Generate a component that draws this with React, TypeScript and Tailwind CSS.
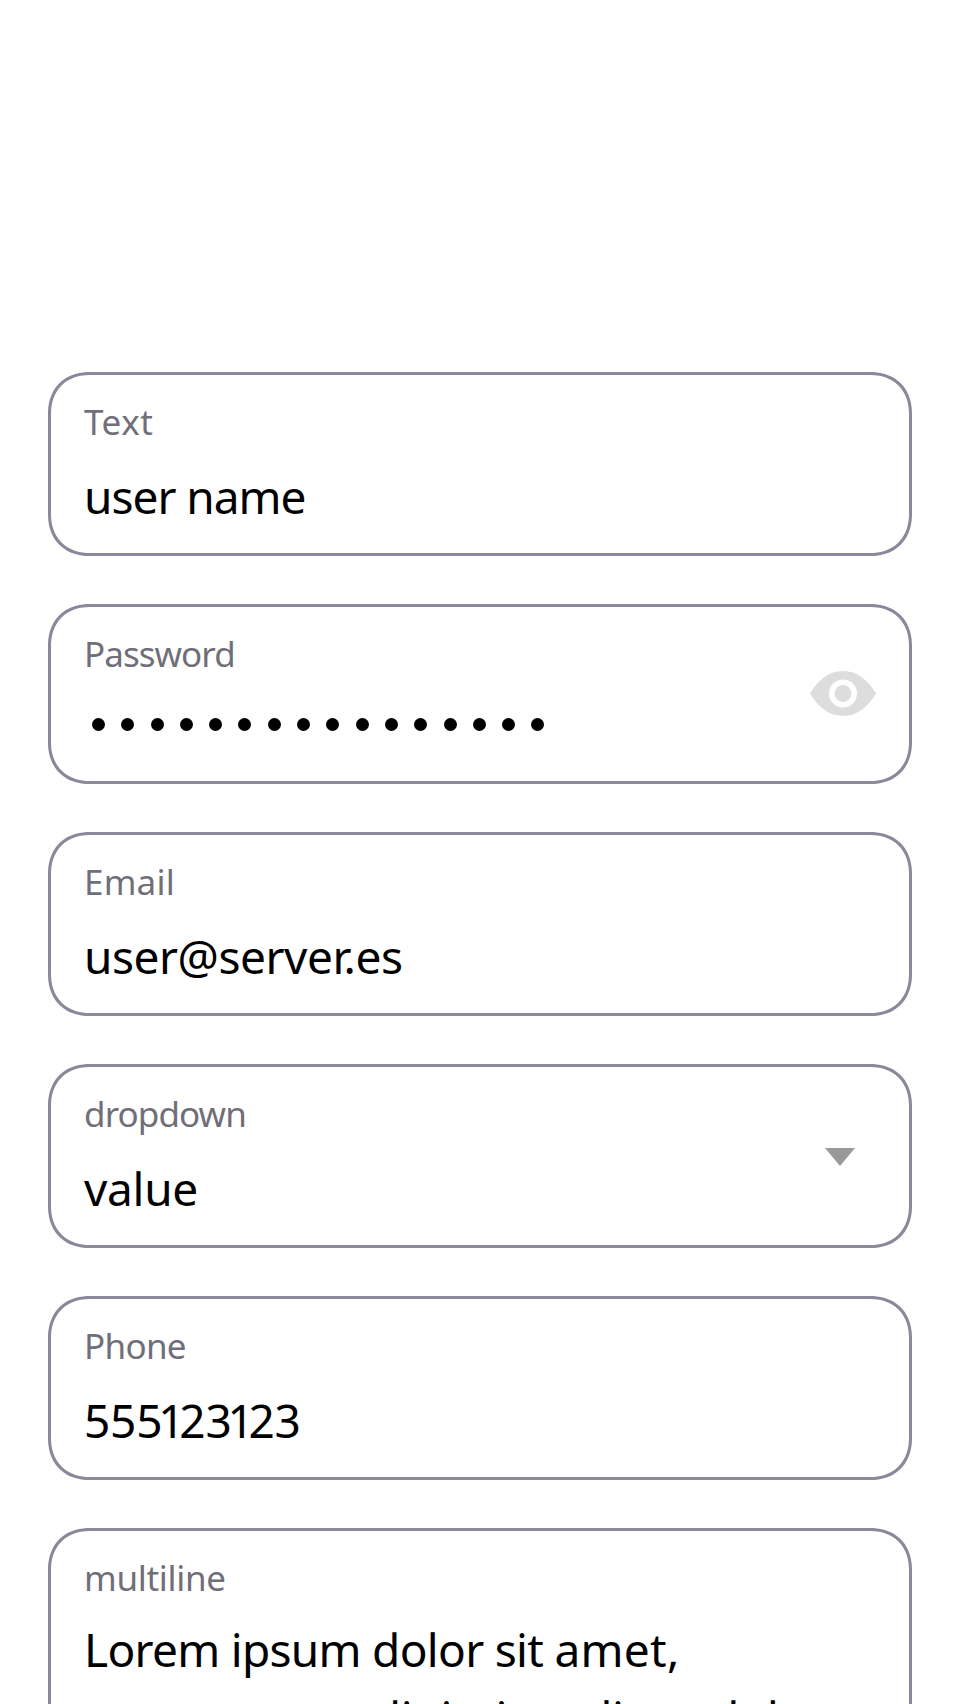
import { ReactNode } from "react";

type Line = { text: ReactNode; spacing: string };

function Field({
  label,
  labelSpacing,
  height = "h-[184px]",
  icon,
  children,
}: {
  label: string;
  labelSpacing: string;
  height?: string;
  icon?: ReactNode;
  children: ReactNode;
}) {
  return (
    <section
      className={`flex w-full shrink-0 items-center justify-between rounded-[42px] border-[3px] border-[#8a8899] pl-[33px] [corner-shape:superellipse(1.15)] ${height}`}
    >
      <div className="flex h-full flex-col pt-[23px]">
        <div className={`h-[48px] text-[35px] leading-[48px] whitespace-nowrap text-[#706f79] ${labelSpacing}`}>
          {label}
        </div>
        {children}
      </div>
      {icon}
    </section>
  );
}

function Value({ text, spacing }: Line) {
  return <div className={`mt-[19px] text-[46px] leading-[62px] whitespace-nowrap text-black ${spacing}`}>{text}</div>;
}

const dots = Array.from({ length: 16 });

export default function App() {
  return (
    <main className="flex h-[1704px] w-[960px] flex-col gap-12 overflow-hidden bg-white px-12 pt-[372px] font-['Noto_Sans',sans-serif]">
      <Field label="Text" labelSpacing="tracking-[0.6px]">
        <Value text="user name" spacing="tracking-[-1px]" />
      </Field>
      <Field
        label="Password"
        labelSpacing="tracking-[-0.95px]"
        height="h-[180px]"
        icon={
          <svg className="mr-[33px] h-[46px] w-[66px]" viewBox="0 0 66 46">
            <path fill="#dddddd" d="M0 22.500C8 9 19 0 33 0S58 9 66 22.500C58 36 47 45 33 45S8 36 0 22.500Z" />
            <circle cx="33" cy="22.500" r="11.200" fill="#dddddd" stroke="#fff" strokeWidth="5.600" />
          </svg>
        }
      >
        <div className="mt-[40px] ml-[8px] flex gap-[16.300px]">
          {dots.map((_, i) => (
            <span key={i} className="size-[13px] shrink-0 rounded-full bg-black" />
          ))}
        </div>
      </Field>
      <Field label="Email" labelSpacing="tracking-[0.2px]">
        <Value text="user@server.es" spacing="tracking-[-0.46px]" />
      </Field>
      <Field
        label="dropdown"
        labelSpacing="tracking-[-0.9px]"
        icon={
          <svg className="relative top-px mr-[54px] h-[18px] w-[30px]" viewBox="0 0 30 18">
            <path fill="#999999" d="M0 0H30L15 18Z" />
          </svg>
        }
      >
        <Value text="value" spacing="tracking-[-0.3px]" />
      </Field>
      <Field label="Phone" labelSpacing="tracking-[-0.7px]">
        <Value
          text={
            <>
              55<span className="tracking-[-4.2px]">5</span>
              <span className="tracking-[-5.4px]">1</span>2<span className="tracking-[-4.2px]">3</span>
              <span className="tracking-[-5.4px]">1</span>23
            </>
          }
          spacing="tracking-[-0.2px]"
        />
      </Field>
      <Field label="multiline" labelSpacing="tracking-[-0.3px]" height="h-[400px]">
        <div className="mt-[13px] text-[46px] leading-[68px] whitespace-nowrap text-black">
          <div className="tracking-[-0.7px]">
            Lorem ipsum dolor sit <span className="tracking-[0.3px]">amet,</span>
          </div>
          <div className="tracking-[-0.3px]">consectetur adipiscing elit, sed do</div>
        </div>
      </Field>
    </main>
  );
}
